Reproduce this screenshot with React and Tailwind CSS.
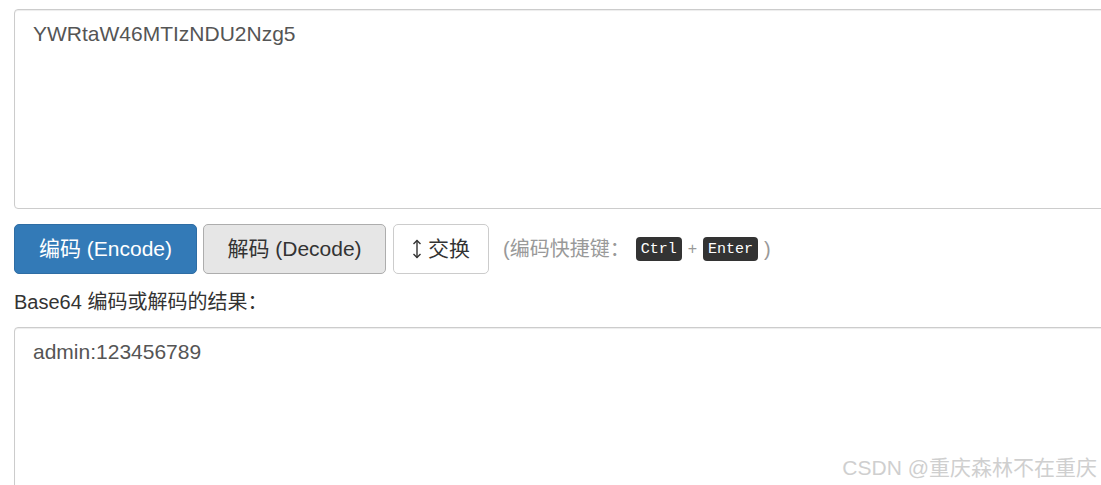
import React from "react";

const font = "font-['Arial','Liberation_Sans','Noto_Sans_CJK_SC',sans-serif]";

function SwapIcon() {
  return (
    <svg width="10" height="20" viewBox="0 0 10 20" className="shrink-0">
      <line x1="5" y1="1.5" x2="5" y2="18.5" stroke="#333" strokeWidth="1.4" />
      <polyline points="1.5,5 5,1.5 8.5,5" fill="none" stroke="#333" strokeWidth="1.4" />
      <polyline points="1.5,15 5,18.5 8.5,15" fill="none" stroke="#333" strokeWidth="1.4" />
    </svg>
  );
}

function Kbd({ children, className = "" }) {
  return (
    <kbd
      className={`flex items-center h-[24px] px-[5px] rounded-[4px] bg-[#333] text-white text-[15px] font-['Liberation_Mono',monospace] leading-none ${className}`}
    >
      {children}
    </kbd>
  );
}

export default function App() {
  return (
    <div className={`relative w-[1101px] h-[485px] overflow-hidden bg-white ${font}`}>
      <div className="pl-[14px] pt-[9px] flex flex-col">
        {/* input */}
        <textarea
          readOnly
          defaultValue="YWRtaW46MTIzNDU2Nzg5"
          className="w-[1140px] h-[200px] resize-none border border-[#ccc] rounded-[4px] pl-[18px] pt-[9px] text-[21px] leading-[30px] text-[#555] shadow-[inset_0_1px_1px_rgba(0,0,0,0.075)] outline-none font-['Arial','Liberation_Sans',sans-serif]"
        />

        {/* buttons */}
        <div className="flex items-center mt-[15px] text-[21px]">
          <button className="w-[183px] h-[50px] rounded-[5px] bg-[#337ab7] border border-[#2e6da4] text-white flex items-center justify-center">
            编码 (Encode)
          </button>
          <button className="ml-[6px] w-[183px] h-[50px] rounded-[5px] bg-[#e6e6e6] border border-[#adadad] text-[#333] flex items-center justify-center">
            解码 (Decode)
          </button>
          <button className="ml-[7px] w-[96px] h-[50px] rounded-[5px] bg-white border border-[#ccc] text-[#333] flex items-center justify-center gap-[6px]">
            <SwapIcon />
            <span>交换</span>
          </button>
          <div className="ml-[14px] flex items-center text-[20px] text-[#999]">
            <span>(编码快捷键：</span>
            <Kbd className="ml-[6px]">Ctrl</Kbd>
            <span className="mx-[6px] text-[16px]">+</span>
            <Kbd>Enter</Kbd>
            <span className="ml-[6px]">)</span>
          </div>
        </div>

        {/* label */}
        <div className="mt-[14px] text-[20px] leading-[28px] text-[#333]">Base64 编码或解码的结果：</div>

        {/* output */}
        <textarea
          readOnly
          defaultValue="admin:123456789"
          className="mt-[11px] w-[1140px] h-[200px] resize-none border border-[#ccc] rounded-[4px] pl-[18px] pt-[9px] text-[21px] leading-[30px] text-[#555] shadow-[inset_0_1px_1px_rgba(0,0,0,0.075)] outline-none font-['Arial','Liberation_Sans',sans-serif]"
        />
      </div>

      {/* watermark */}
      <div className="absolute right-[4px] top-[452px] text-[21px] font-normal text-[#cfcfcf] [text-shadow:0_1px_0_rgba(255,255,255,0.8)]">
        CSDN @重庆森林不在重庆
      </div>
    </div>
  );
}
